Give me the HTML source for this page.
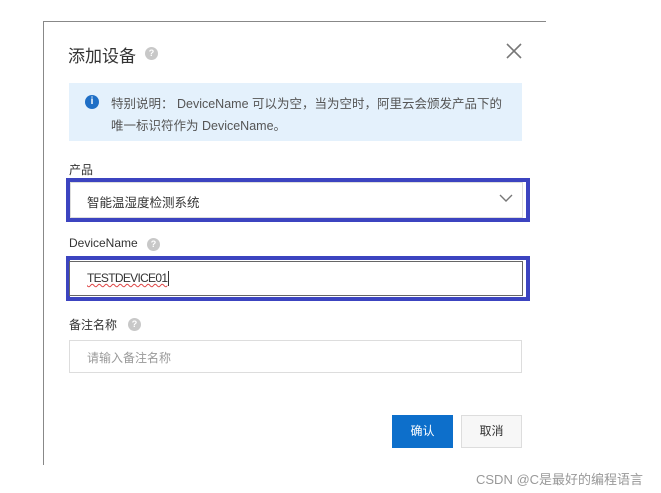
<!DOCTYPE html>
<html><head><meta charset="utf-8"><style>
*{margin:0;padding:0;box-sizing:border-box}
body{width:661px;height:493px;background:#fff;position:relative;overflow:hidden;font-family:"Liberation Sans","Noto Sans CJK SC",sans-serif;color:#333}
.a{position:absolute}
.q{position:absolute;width:13px;height:13px;border-radius:50%;background:#c8c8c8;color:#fff;font-size:9px;line-height:13px;text-align:center;font-weight:bold}
</style></head><body>
<div class="a" style="left:43px;top:21px;width:503px;height:1px;background:#888"></div>
<div class="a" style="left:43px;top:21px;width:1px;height:444px;background:#888"></div>
<div class="a" style="left:68px;top:42px;font-size:17px;color:#333">添加设备</div>
<div class="q" style="left:145px;top:47px">?</div>
<svg class="a" style="left:506px;top:43px" width="16" height="16"><path d="M1 1L15 15M15 1L1 15" stroke="#777" stroke-width="1.6"/></svg>
<div class="a" style="left:69px;top:83px;width:453px;height:58px;background:#e4f1fc"></div>
<div class="a" style="left:85px;top:95px;width:14px;height:14px;border-radius:50%;background:#1f6fc6;color:#fff;font-size:10px;font-weight:bold;text-align:center;line-height:14px">i</div>
<div class="a" style="left:111px;top:93px;font-size:12.5px;line-height:22px;color:#555;width:420px;white-space:nowrap">特别说明： DeviceName 可以为空，当为空时，阿里云会颁发产品下的<br>唯一标识符作为 DeviceName。</div>
<div class="a" style="left:69px;top:161px;font-size:12px;color:#333">产品</div>
<div class="a" style="left:66px;top:178px;width:464px;height:44px;border:4px solid #3c44c0"></div>
<div class="a" style="left:70px;top:182px;width:453px;height:36px;border:1px solid #ddd"></div>
<div class="a" style="left:87px;top:192px;font-size:12.5px;color:#333">智能温湿度检测系统</div>
<svg class="a" style="left:499px;top:194px" width="14" height="9"><path d="M1 1L7 7L13 1" stroke="#777" stroke-width="1.4" fill="none"/></svg>
<div class="a" style="left:69px;top:236px;font-size:12px;color:#333">DeviceName</div>
<div class="q" style="left:147px;top:238px">?</div>
<div class="a" style="left:66px;top:256px;width:464px;height:45px;border:4px solid #3c44c0"></div>
<div class="a" style="left:69px;top:261px;width:454px;height:35px;border:1px solid #666"></div>
<div class="a" style="left:87px;top:271px;font-size:12px;color:#333;letter-spacing:-0.7px"><span style="text-decoration:underline wavy #d44;text-decoration-thickness:1px">TESTDEVICE01</span><span style="display:inline-block;width:1px;height:15px;background:#333;vertical-align:middle;margin-left:1px"></span></div>
<div class="a" style="left:69px;top:316px;font-size:12px;color:#333">备注名称</div>
<div class="q" style="left:128px;top:318px">?</div>
<div class="a" style="left:69px;top:340px;width:453px;height:33px;border:1px solid #ddd"></div>
<div class="a" style="left:87px;top:349px;font-size:12px;color:#999">请输入备注名称</div>
<div class="a" style="left:392px;top:415px;width:61px;height:33px;background:#0d6fcb;color:#fff;font-size:12px;text-align:center;line-height:33px">确认</div>
<div class="a" style="left:461px;top:415px;width:61px;height:33px;background:#f7f7f7;border:1px solid #ddd;color:#333;font-size:12px;text-align:center;line-height:31px">取消</div>
<div class="a" style="left:476px;top:469px;font-size:13px;color:#999;white-space:nowrap">CSDN @C是最好的编程语言</div>
</body></html>
